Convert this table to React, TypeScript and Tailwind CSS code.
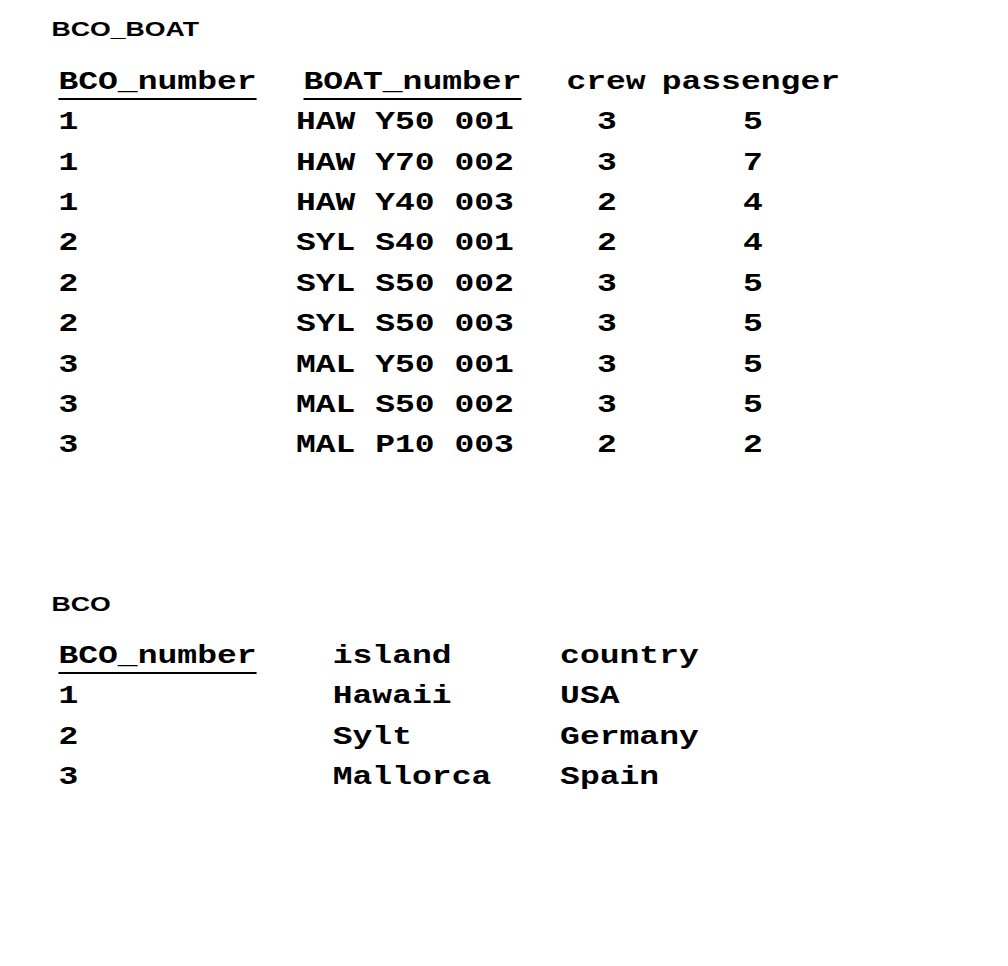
import React from 'react';

const boats = [
  ['1', 'HAW Y50 001', '3', '5'],
  ['1', 'HAW Y70 002', '3', '7'],
  ['1', 'HAW Y40 003', '2', '4'],
  ['2', 'SYL S40 001', '2', '4'],
  ['2', 'SYL S50 002', '3', '5'],
  ['2', 'SYL S50 003', '3', '5'],
  ['3', 'MAL Y50 001', '3', '5'],
  ['3', 'MAL S50 002', '3', '5'],
  ['3', 'MAL P10 003', '2', '2'],
];

const bcos = [
  ['1', 'Hawaii', 'USA'],
  ['2', 'Sylt', 'Germany'],
  ['3', 'Mallorca', 'Spain'],
];

const key = 'underline decoration-2 underline-offset-[9px] [text-decoration-skip-ink:none]';

export default function App() {
  return (
    <div className="w-[1008px] h-[966px] bg-white text-black overflow-hidden">
      <div className="origin-top-left scale-x-[1.27] pt-[17.5px]">
        <h2 className="ml-[40.5px] font-['Liberation_Sans',Arial,sans-serif] font-bold text-[21px] leading-none">
          BCO_BOAT
        </h2>

        <div className="mt-[23.3px] ml-[46px] grid grid-cols-[187px_212px_76px_auto] font-['Liberation_Mono','Courier_New',monospace] font-bold text-[26px] leading-[40.4px] whitespace-pre">
          <div><span className={key}>BCO_number</span></div>
          <div className="pl-[6px]"><span className={key}>BOAT_number</span></div>
          <div className="pl-[1px]">crew</div>
          <div>passenger</div>
          {boats.map((b, i) => (
            <React.Fragment key={i}>
              <div>{b[0]}</div>
              <div>{b[1]}</div>
              <div className="pl-[25px]">{b[2]}</div>
              <div className="pl-[64px]">{b[3]}</div>
            </React.Fragment>
          ))}
        </div>

        <h2 className="mt-[126.8px] ml-[40.5px] font-['Liberation_Sans',Arial,sans-serif] font-bold text-[21px] leading-none">
          BCO
        </h2>

        <div className="mt-[22.3px] ml-[46px] grid grid-cols-[216px_179px_auto] font-['Liberation_Mono','Courier_New',monospace] font-bold text-[26px] leading-[40.4px] whitespace-pre">
          <div><span className={key}>BCO_number</span></div>
          <div>island</div>
          <div>country</div>
          {bcos.map((b, i) => (
            <React.Fragment key={i}>
              <div>{b[0]}</div>
              <div>{b[1]}</div>
              <div>{b[2]}</div>
            </React.Fragment>
          ))}
        </div>
      </div>
    </div>
  );
}
